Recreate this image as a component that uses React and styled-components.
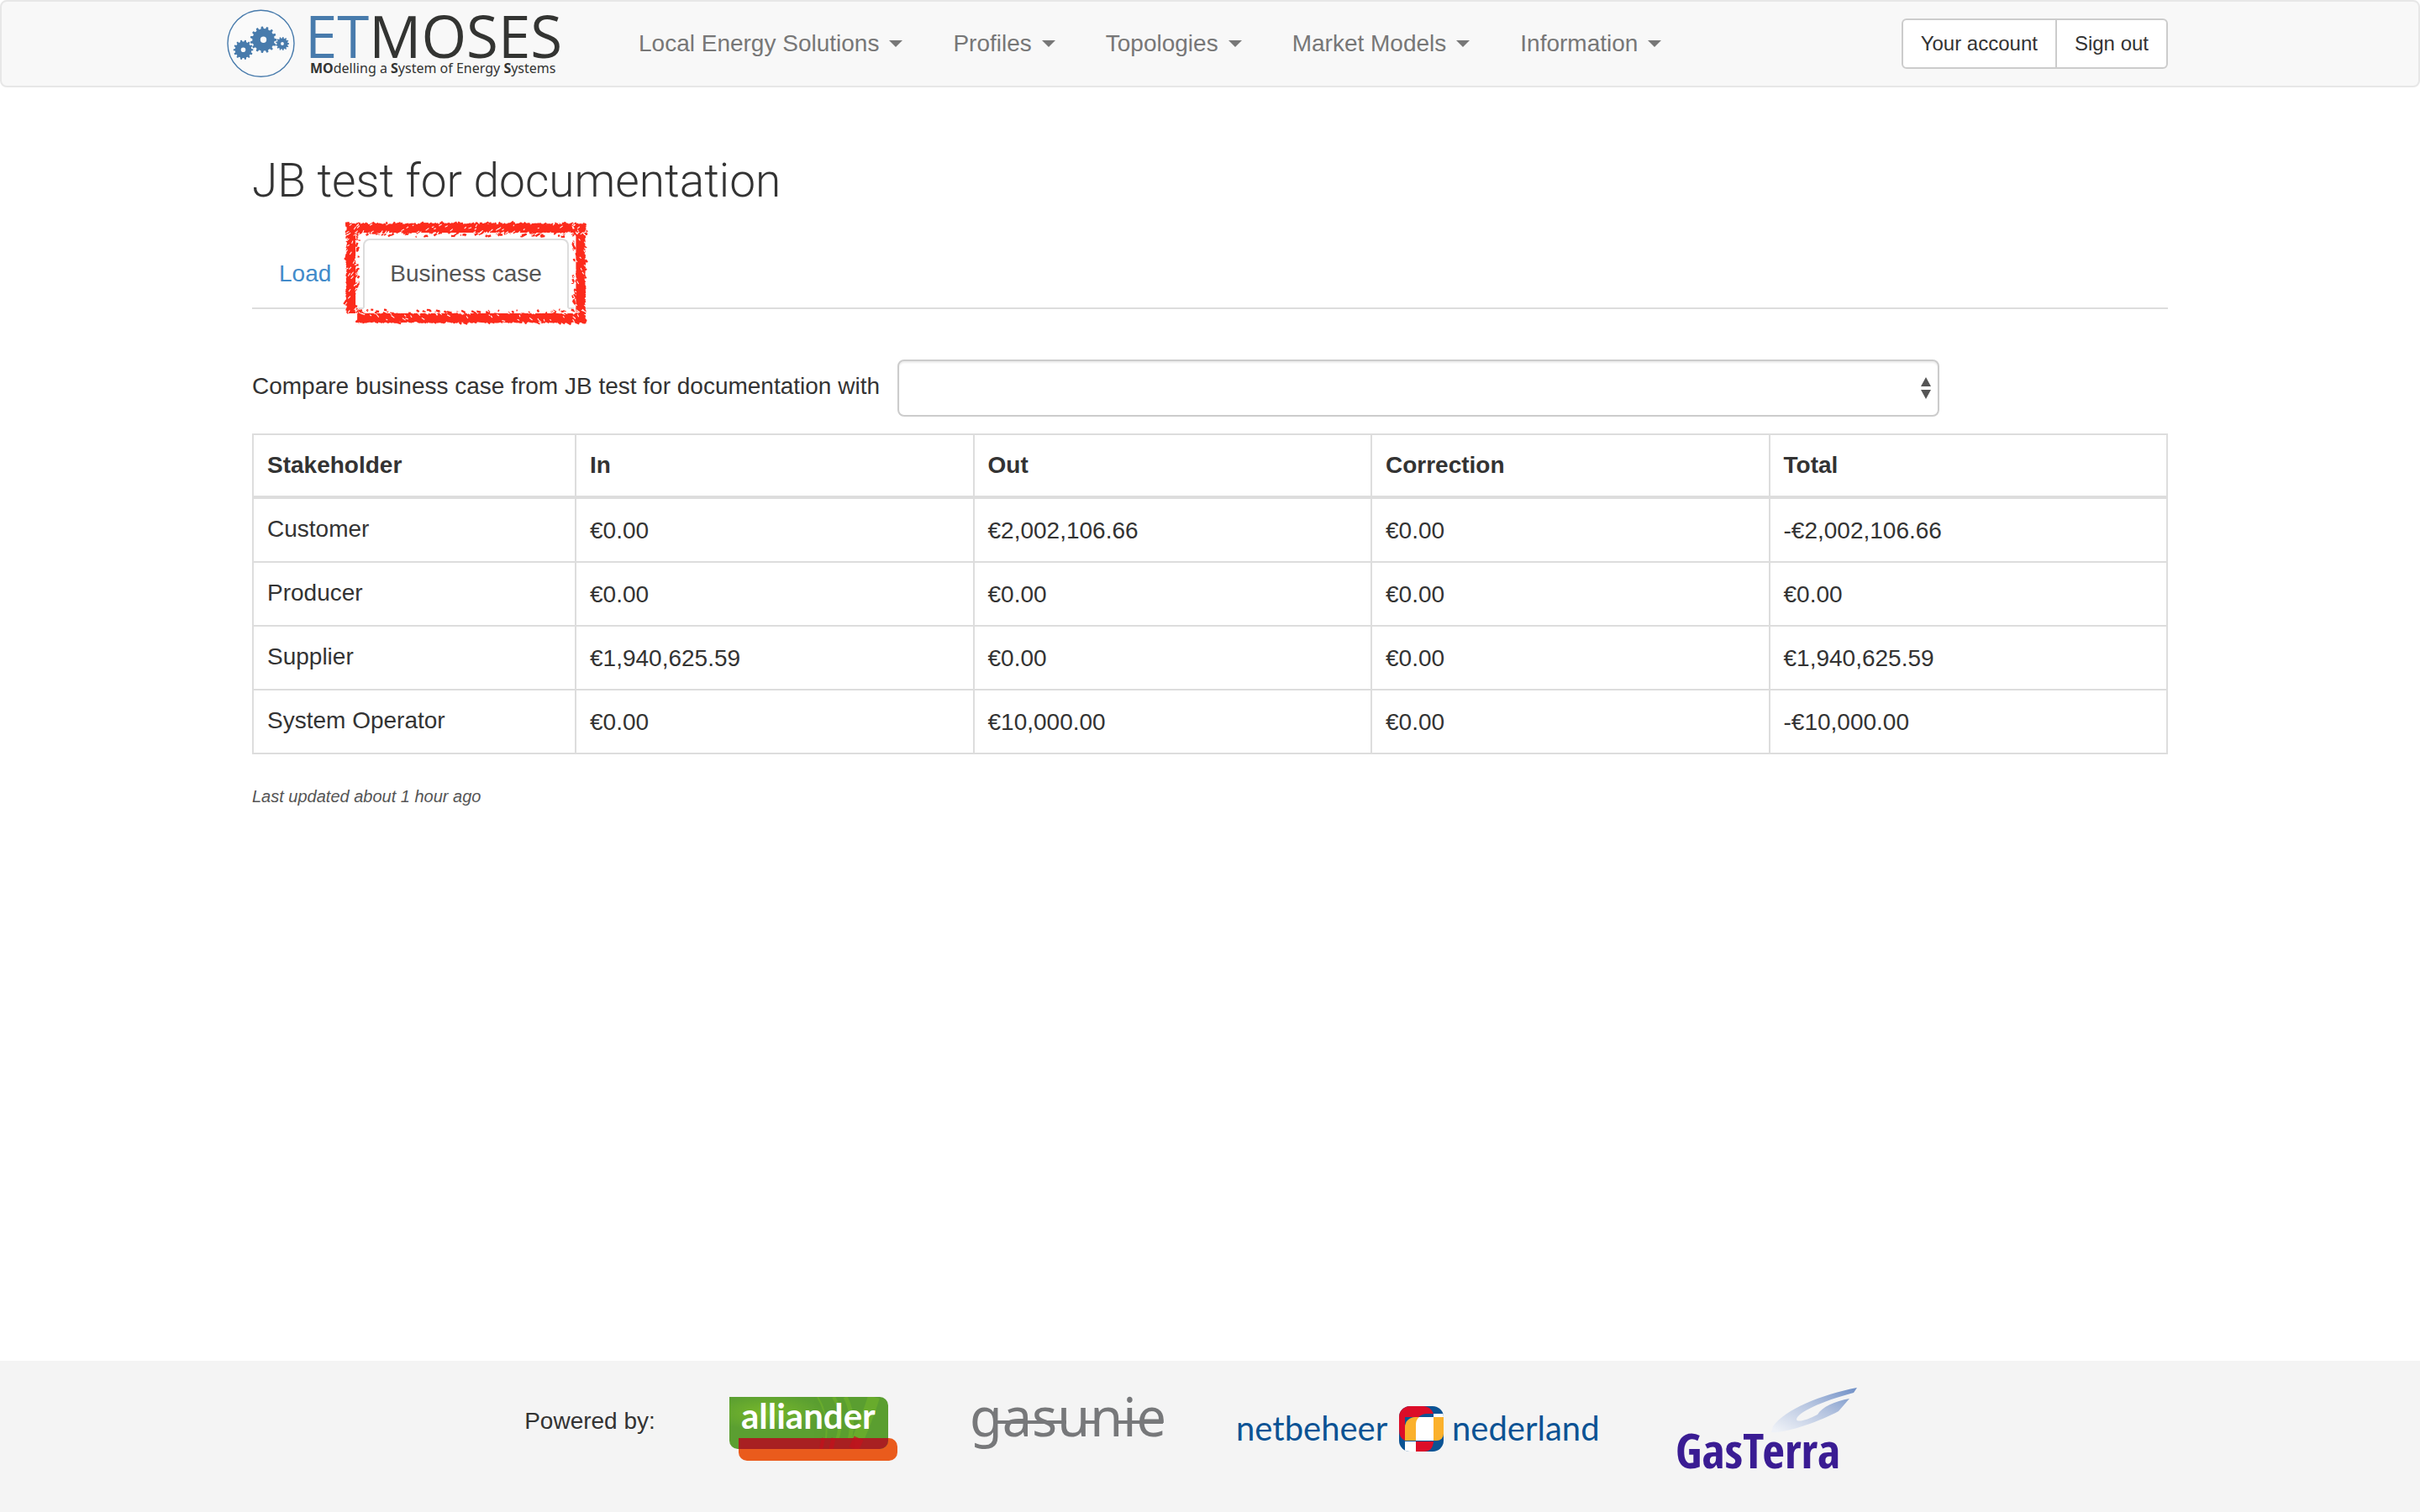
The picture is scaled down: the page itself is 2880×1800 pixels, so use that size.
import React from "react";
import styled, { createGlobalStyle } from "styled-components";

const GlobalStyle = createGlobalStyle`
  *, *::before, *::after { box-sizing: border-box; }
  body {
    margin: 0;
    background: #fff;
    color: #333;
    font-family: "Liberation Sans", "Helvetica Neue", Helvetica, Arial, sans-serif;
    font-size: 28px;
    line-height: 40px;
  }
  button, select { font: inherit; }
`;

const Page = styled.div`
  display: flex;
  flex-direction: column;
  min-height: 100vh;
`;

const Container = styled.div`
  width: 100%;
  max-width: 2340px;
  margin: 0 auto;
  padding: 0 30px;
`;

/* ---------- Navigation bar ---------- */

const Navbar = styled.header`
  background: #f8f8f8;
  border: 2px solid #e7e7e7;
  border-radius: 8px;
`;

const NavbarInner = styled(Container)`
  display: flex;
  align-items: center;
  min-height: 100px;
  padding-left: 0;
`;

const Brand = styled.a`
  display: flex;
  margin-right: 60px;
`;

const Menu = styled.nav`
  display: flex;
  flex: 1;
`;

const MenuButton = styled.button`
  display: flex;
  align-items: center;
  gap: 12px;
  padding: 30px;
  border: 0;
  background: none;
  color: #777;
  white-space: nowrap;
  cursor: pointer;

  &::after {
    content: "";
    border: 8px solid transparent;
    border-top-color: currentColor;
    border-bottom: 0;
  }
`;

const ButtonGroup = styled.div`
  display: flex;
`;

const AccountButton = styled.button`
  padding: 10px 21px;
  border: 2px solid #ccc;
  background: #fff;
  color: #333;
  font-size: 24px;
  line-height: 36px;
  cursor: pointer;

  &:first-child { border-radius: 6px 0 0 6px; }
  &:last-child { border-radius: 0 6px 6px 0; }
  & + & { margin-left: -2px; }
`;

/* ---------- Main content ---------- */

const Main = styled(Container).attrs({ as: "main" })`
  flex: 1;
  padding-top: 80px;
  padding-bottom: 60px;
`;

const Title = styled.h1`
  margin: 0 0 38px;
  font-family: Roboto, "Liberation Sans", sans-serif;
  font-size: 55px;
  font-weight: 300;
  line-height: 62px;
`;

const Tabs = styled.ul`
  display: flex;
  gap: 6px;
  margin: 0 0 60px;
  padding: 0;
  border-bottom: 2px solid #ddd;
  list-style: none;
`;

const TabItem = styled.li`
  position: relative;
  margin-bottom: -2px;
`;

const TabLink = styled.a`
  display: block;
  padding: 20px 30px;
  border: 2px solid transparent;
  border-radius: 8px 8px 0 0;
  color: #428bca;
  text-decoration: none;

  &[aria-current] {
    border-color: #ddd #ddd #fff;
    background: #fff;
    color: #555;
  }
`;

const Marker = styled.svg`
  position: absolute;
  top: -24px;
  left: -24px;
  width: calc(100% + 48px);
  height: calc(100% + 48px);
  overflow: visible;
  pointer-events: none;
`;

const CompareRow = styled.form`
  display: flex;
  gap: 8px;
  margin-bottom: 20px;
`;

const CompareLabel = styled.label`
  min-width: 760px;
  line-height: 64px;
  white-space: nowrap;
`;

const SelectBox = styled.div`
  position: relative;
  flex: 0 1 1240px;
`;

const Select = styled.select`
  display: block;
  width: 100%;
  height: 68px;
  padding: 12px 24px;
  appearance: none;
  border: 2px solid #ccc;
  border-radius: 8px;
  background: #fff;
  box-shadow: inset 0 2px 2px rgba(0, 0, 0, 0.075);
  color: #555;
`;

const SelectArrows = styled.svg`
  position: absolute;
  top: 20px;
  right: 10px;
  pointer-events: none;
`;

const Table = styled.table`
  width: 100%;
  border-collapse: collapse;
  table-layout: fixed;
`;

const HeadCell = styled.th`
  width: ${(p) => (p.$narrow ? "384px" : "auto")};
  padding: 16px;
  border: 2px solid #ddd;
  border-bottom-width: 4px;
  font-weight: 700;
  text-align: left;
`;

const NameCell = styled.td`
  padding: 16px;
  border: 2px solid #ddd;
  vertical-align: top;
`;

const AmountCell = styled.td`
  padding: 18px 16px 16px;
  border: 2px solid #ddd;
`;

const Updated = styled.p`
  margin: 36px 0 0;
  color: #555;
  font-size: 20px;
  font-style: italic;
  line-height: 28px;
`;

/* ---------- Footer ---------- */

const Footer = styled.footer`
  display: flex;
  align-items: center;
  justify-content: center;
  gap: 88px;
  padding: 32px 0 50px;
  background: #f4f4f4;
`;

const PoweredBy = styled.span`
  padding-bottom: 18px;
`;

const Sponsor = styled.a`
  display: flex;

  svg { overflow: visible; }
`;

/* ---------- Drawings ---------- */

function gearPath(cx, cy, outer, inner, hole, teeth) {
  const points = [];
  const step = (Math.PI * 2) / teeth;
  for (let i = 0; i < teeth; i += 1) {
    const a = i * step;
    [[inner, -0.3], [outer, -0.17], [outer, 0.17], [inner, 0.3]].forEach(([r, k]) => {
      points.push(`${(cx + r * Math.cos(a + k * step)).toFixed(2)},${(cy + r * Math.sin(a + k * step)).toFixed(2)}`);
    });
  }
  return `M${points.join("L")}Z M${cx - hole},${cy} a${hole},${hole} 0 1 0 ${hole * 2},0 a${hole},${hole} 0 1 0 ${-hole * 2},0Z`;
}

function EtMosesLogo() {
  return (
    <svg width="400" height="96" viewBox="270 4 400 96" overflow="visible" role="img" aria-label="ETMoses">
      <circle cx="310.5" cy="51.7" r="39.5" fill="#fafafa" stroke="#487bac" strokeWidth="1.4" />
      <g fill="#487bac" fillRule="evenodd">
        <path d={gearPath(289.5, 59.3, 11.8, 9.8, 2.8, 14)} />
        <path d={gearPath(313.5, 47.3, 15.8, 13.2, 3.7, 15)} />
        <path d={gearPath(336, 52, 8, 6.5, 1.9, 13)} />
      </g>
      <g fill="#333432">
        <text x="363" y="69" fontFamily='"Open Sans", sans-serif' fontSize="69"><tspan fill="#487bac">ET</tspan>MOSES</text>
        <text x="369" y="87" fontFamily='"Noto Sans", sans-serif' fontSize="16">
          <tspan fontWeight="700">MO</tspan>delling a <tspan fontWeight="700">S</tspan>ystem of Energy <tspan fontWeight="700">S</tspan>ystems
        </text>
      </g>
    </svg>
  );
}

function AllianderLogo() {
  return (
    <svg width="200" height="76" viewBox="0 0 200 76" role="img" aria-label="Alliander">
      <defs>
        <radialGradient id="leaf" cx="0.24" cy="0.3" r="0.35">
          <stop offset="0" stopColor="#78b82a" />
          <stop offset="1" stopColor="#5b9f31" />
        </radialGradient>
        <clipPath id="leafShape">
          <path d="M0 0H179a10 10 0 0 1 10 10V52a10 10 0 0 1-10 10H10a10 10 0 0 1-10-10Z" />
        </clipPath>
      </defs>
      <path fill="#ea5b1c" d="M11 49H190a10 10 0 0 1 10 10V66a10 10 0 0 1-10 10H21a10 10 0 0 1-10-10Z" />
      <g clipPath="url(#leafShape)">
        <rect width="189" height="62" fill="url(#leaf)" />
        <g fill="none" stroke="#72b52b" opacity="0.6">
          <path strokeWidth="2" d="M105 0q16 26 8 62" />
          <path strokeWidth="4" d="M124 0q16 26 0 62" />
          <path strokeWidth="5" d="M138 0q14 26 2 62" />
          <path strokeWidth="14" d="M172 0q-8 26-24 62" />
        </g>
        <path fill="#a82022" d="M11 49H189V62H11Z" />
        <g fill="none" stroke="#c4121c" opacity="0.7">
          <path strokeWidth="4" d="M112 49l-3 13" />
          <path strokeWidth="5" d="M124 49l-3 13" />
          <path strokeWidth="12" d="M154 49l-6 13" />
        </g>
      </g>
      <text x="14" y="38" fill="#fff" fontFamily="Lato, sans-serif" fontWeight="700" fontSize="42">alliander</text>
    </svg>
  );
}

function GasunieLogo() {
  return (
    <svg width="230" height="50" viewBox="0 0 230 50" role="img" aria-label="Gasunie">
      <text x="-2" y="34" fill="#77787a" fontFamily='"Noto Sans", sans-serif' fontSize="63">gasunie</text>
      <path d="M26 17H113M132 17H152M174 17H228" stroke="#77787a" strokeWidth="4" />
    </svg>
  );
}

function NetbeheerLogo() {
  return (
    <svg width="430" height="54" viewBox="0 0 430 54" role="img" aria-label="Netbeheer Nederland">
      <g fill="#0b5394" fontFamily="Lato, sans-serif" fontSize="40">
        <text x="-3" y="41">netbeheer</text>
        <text x="254" y="41">nederland</text>
      </g>
      <g transform="translate(191 0)">
        <clipPath id="tile"><rect width="53" height="54" rx="13" /></clipPath>
        <g clipPath="url(#tile)">
          <rect width="53" height="54" fill="#0b5394" />
          <path fill="#fff" d="M7 42H20V54H7ZM36 9H53V14H36Z" />
          <path fill="#dc0d28" d="M0 0H28a13 13 0 0 1 13 9V13H7V41Q0 38 0 28Z" />
          <path fill="#0b5394" d="M23 13Q28 9 33 9H41V13Z" />
          <path fill="#fbb12c" d="M19 13H53V33a8 8 0 0 1-8 8H7V25a12 12 0 0 1 12-12Z" />
          <path fill="#fff" d="M24 13H41V41H20V22Q20 16 24 13Z" />
          <path fill="#dc0d28" d="M20 42H41Q40 54 30 54H20Z" />
        </g>
      </g>
    </svg>
  );
}

function GasTerraLogo() {
  return (
    <svg width="264" height="98" viewBox="1992 1652 264 98" role="img" aria-label="GasTerra">
      <defs>
        <linearGradient id="feather" x1="0" y1="1" x2="1" y2="0">
          <stop offset="0.05" stopColor="#eef1f7" />
          <stop offset="0.55" stopColor="#b4c3df" />
          <stop offset="1" stopColor="#6f8fc6" />
        </linearGradient>
      </defs>
      <path
        fill="url(#feather)"
        d="M2210 1652C2168 1660 2124 1678 2110 1698L2108 1705C2124 1707 2166 1692 2188 1680L2201 1665C2184 1668 2168 1675 2163 1684C2152 1690 2139 1694 2138 1690C2138 1682 2168 1668 2206 1658Z"
      />
      <text x="1994" y="1748" fill="#3a1c93" fontFamily='"Open Sans Condensed", "Roboto Condensed", sans-serif' fontWeight="700" fontSize="58">GasTerra</text>
    </svg>
  );
}

/* Crayon frame: a solid core on every side, roughened by short slanted strokes and small gaps. */
function crayonFrame(width, height) {
  let seed = 7;
  const rand = () => {
    seed = (seed * 16807) % 2147483647;
    return seed / 2147483647;
  };
  const strokes = [];
  const gaps = [];
  const side = (length, place) => {
    for (let t = 0; t < length; t += 1.2) {
      const across = 1 + rand() * 16;
      strokes.push(place(t, across, Math.min(t + 1 + rand() * 4, length), across - rand() * 3));
      strokes.push(place(t, 2 + rand() * 2, Math.min(t + 4, length), 1 + rand() * 3));
      if (rand() > 0.5) {
        const g = rand() > 0.3 ? 12 + rand() * 5 : 1 + rand() * 10;
        gaps.push(place(t, g, t + 1 + rand() * 3, g - 1 - rand() * 2));
      }
    }
  };
  const seg = (a, b, c, d) => `M${a.toFixed(1)} ${b.toFixed(1)}L${c.toFixed(1)} ${d.toFixed(1)}`;
  side(width, (t, a, u, b) => seg(t, a, u, b));
  side(height - 12, (t, a, u, b) => seg(a, t, b, u));
  side(width - 12, (t, a, u, b) => seg(t + 12, height - a, u + 12, height - b));
  side(height, (t, a, u, b) => seg(width - a, t, width - b, u));
  const core = `M2 7.500H${width - 2}M7.500 4V${height - 12}M14 ${height - 7.5}H${width - 2}M${width - 7.5} 4V${height - 2}`;
  return { core, strokes: strokes.join(""), gaps: gaps.join("") };
}

const frame = crayonFrame(284, 120);

function TabMarker() {
  return (
    <Marker viewBox="-3 -5 290 132" preserveAspectRatio="none" fill="none" aria-hidden="true">
      <path d={frame.core} stroke="#fc2b1c" strokeWidth="9" />
      <path d={frame.strokes} stroke="#fc2b1c" strokeWidth="2.4" />
      <path d={frame.gaps} stroke="#fff" strokeWidth="1" />
    </Marker>
  );
}

/* ---------- Data ---------- */

const menuItems = ["Local Energy Solutions", "Profiles", "Topologies", "Market Models", "Information"];
const columns = ["Stakeholder", "In", "Out", "Correction", "Total"];
const rows = [
  ["Customer", "€0.00", "€2,002,106.66", "€0.00", "-€2,002,106.66"],
  ["Producer", "€0.00", "€0.00", "€0.00", "€0.00"],
  ["Supplier", "€1,940,625.59", "€0.00", "€0.00", "€1,940,625.59"],
  ["System Operator", "€0.00", "€10,000.00", "€0.00", "-€10,000.00"],
];

export default function App() {
  return (
    <Page>
      <GlobalStyle />
      <Navbar>
        <NavbarInner>
          <Brand href="#home"><EtMosesLogo /></Brand>
          <Menu>
            {menuItems.map((item) => <MenuButton key={item} type="button">{item}</MenuButton>)}
          </Menu>
          <ButtonGroup>
            <AccountButton type="button">Your account</AccountButton>
            <AccountButton type="button">Sign out</AccountButton>
          </ButtonGroup>
        </NavbarInner>
      </Navbar>

      <Main>
        <Title>JB test for documentation</Title>
        <Tabs>
          <TabItem><TabLink href="#load">Load</TabLink></TabItem>
          <TabItem>
            <TabLink href="#business-case" aria-current="page">Business case</TabLink>
            <TabMarker />
          </TabItem>
        </Tabs>

        <CompareRow>
          <CompareLabel htmlFor="compare">Compare business case from JB test for documentation with</CompareLabel>
          <SelectBox>
            <Select id="compare" defaultValue=""><option value="" /></Select>
            <SelectArrows width="12" height="28" viewBox="0 0 12 28" fill="#555" aria-hidden="true">
              <path d="M6 1L12 12H0ZM0 16H12L6 27Z" />
            </SelectArrows>
          </SelectBox>
        </CompareRow>

        <Table>
          <thead>
            <tr>
              {columns.map((name, i) => <HeadCell key={name} scope="col" $narrow={i === 0}>{name}</HeadCell>)}
            </tr>
          </thead>
          <tbody>
            {rows.map(([name, ...amounts]) => (
              <tr key={name}>
                <NameCell>{name}</NameCell>
                {amounts.map((amount, i) => <AmountCell key={columns[i + 1]}>{amount}</AmountCell>)}
              </tr>
            ))}
          </tbody>
        </Table>
        <Updated>Last updated about 1 hour ago</Updated>
      </Main>

      <Footer>
        <PoweredBy>Powered by:</PoweredBy>
        <Sponsor href="#alliander"><AllianderLogo /></Sponsor>
        <Sponsor href="#gasunie"><GasunieLogo /></Sponsor>
        <Sponsor href="#netbeheer"><NetbeheerLogo /></Sponsor>
        <Sponsor href="#gasterra"><GasTerraLogo /></Sponsor>
      </Footer>
    </Page>
  );
}
